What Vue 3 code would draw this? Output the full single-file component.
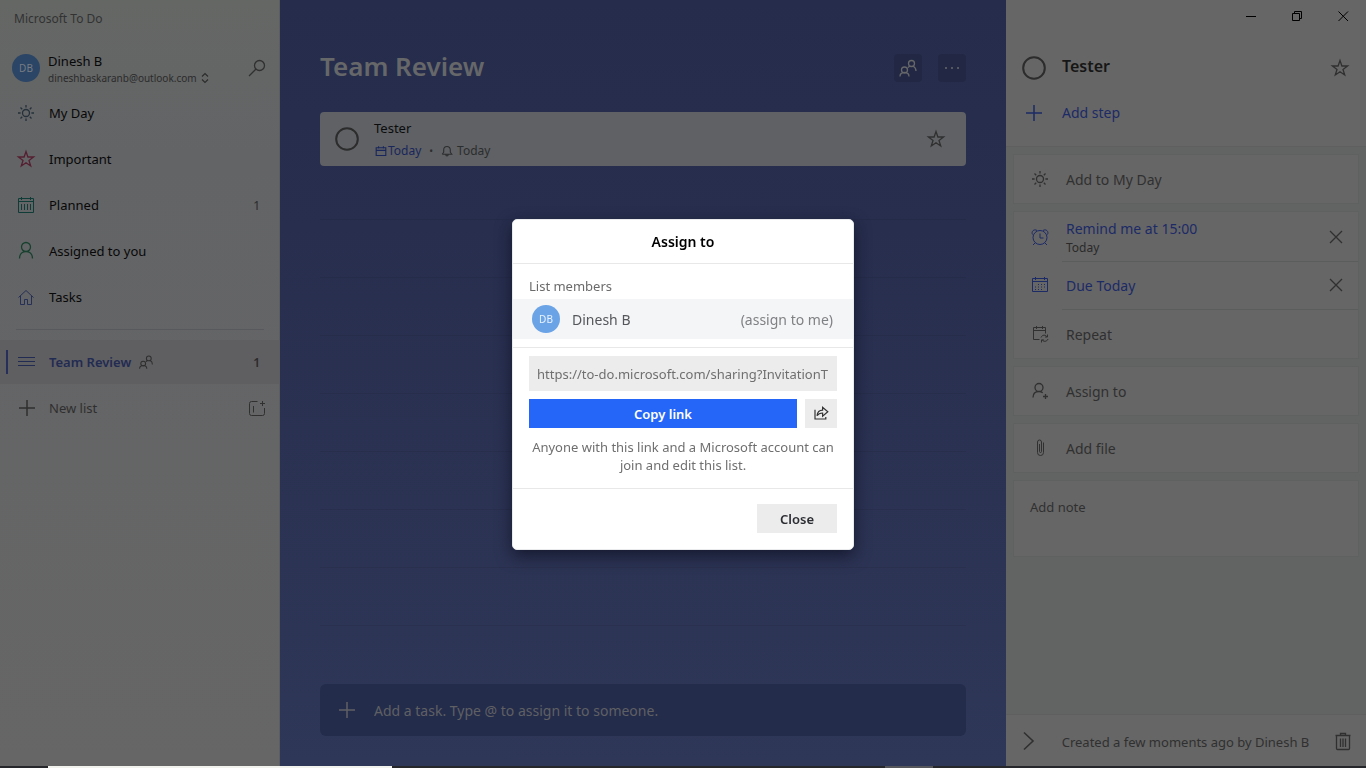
<script setup>
import { h, ref } from 'vue'

const shapes = {
  sun: 'M10 6.5a3.5 3.5 0 1 0 0 7a3.5 3.5 0 1 0 0-7ZM10 2v2.6M10 15.4V18M2 10h2.6M15.4 10H18M4.5 4.5l1.7 1.7M13.8 13.8l1.7 1.7M15.5 4.5l-1.7 1.7M6.2 13.8l-1.7 1.7',
  star: 'M10 2.5L11.9 8H17.6L13 11.5L14.7 17L10 13.7L5.3 17L7 11.5L2.4 8H8.1Z',
  planned: 'M2.5 3.5h15v14h-15zM2.5 6.5h15M5.5 2v3M14.5 2v3M5.5 9v6M8.5 9v6M11.5 9v6M14.5 9v6',
  person: 'M10 1.5a4.5 4.5 0 1 0 0 9a4.5 4.5 0 1 0 0-9ZM3.5 17.5c0-4.5 3-7 6.5-7s6.5 2.5 6.5 7',
  home: 'M2.5 10.5L10 3.5l7.5 7M4.500 9v8.5h4v-5h3v5h4V9',
  list: 'M2 5.5h17M2 9.5h17M2 13.5h17',
  plus: 'M10 2v16M2 10h16',
  people: 'M13.5 2.500a3 3 0 1 0 0 6a3 3 0 1 0 0-6ZM11.7 8.2c-.7.3-1.2.8-1.7 1.5M15.3 8.2c1.800 1 2.700 2.500 2.700 4.800M6.500 9a3 3 0 1 0 0 6a3 3 0 1 0 0-6ZM2 18.500c0-2.500 1.500-4 4.500-4s4.500 1.500 4.500 4',
  search: 'M12.500 2.500a5 5 0 1 0 0 10a5 5 0 1 0 0-10ZM9 11L2 18',
  group: 'M10.500 3.500h-6q-2 0-2 2v10q0 2 2 2h11q2 0 2-2v-5.500M6.500 8v6.500M15.500 3v5M13 5.500h5',
  sort: 'M5 7.500L10 2.500l5 5M5 12.500L10 17.500l5-5',
  more: 'M3 10h2M9 10h2M15 10h2',
  circle: 'M10 1a9 9 0 1 0 0 18a9 9 0 1 0 0-18Z',
  date: 'M2 4.500h16v13H2zM2 9h16M6 2v4M14 2v4',
  bell: 'M2 15.500h16l-2.500-3.500V8a5.500 5.500 0 0 0-11 0v4L2 15.500M8 16c0 3 4 3 4 0',
  alarm: 'M10 3.500a7 7 0 1 0 0 14a7 7 0 1 0 0-14ZM10 6.500v4.500h3.500M2.500 7.500c-1.500-3 1.500-6 4.500-4M17.500 7.500c1.500-3-1.500-6-4.500-4M5 16l-2 2M15 16l2 2',
  due: 'M2.500 3.500h15v13h-15zM2.500 6.500h15M5.500 2v3M14.500 2v3M8 9.500h1M11 9.500h1M14 9.500h1M5 12h1M8 12h1M11 12h1M14 12h1M5 14.500h1M8 14.500h1M11 14.500h1',
  repeat: 'M9.500 15.500h-6v-12h12v6M3.500 6.500h12M6.500 2v3M12.500 2v3M11 13.500c1-3 5-3 6-.5M17.500 10.500V13H15M18 15c-1 3-5 3-6 .5M11.500 18.500V16H14',
  assign: 'M9 2.500a4 4 0 1 0 0 8a4 4 0 1 0 0-8ZM3 16.500c0-3.800 2.500-6 6-6c1.500 0 2.700.5 3.700 1.300M15.500 13v5M13 15.500h5',
  clip: 'M13.500 4.500v10a3 3 0 0 1-6 0V4a2 2 0 0 1 4 0v9.500a1 1 0 0 1-2 0V6',
  close: 'M4 4l12 12M16 4L4 16',
  chevron: 'M6 1.500L15 10L6 18.500',
  trash: 'M2.500 4.500h15M7.500 4V2.500h5V4M3.500 5v12.500q0 1 1 1h11q1 0 1-1V5M7.500 7.500v8.500M10 7.500v8.500M12.500 7.500v8.500',
  share: 'M2.500 6v11.500h13.500v-2.500M5 13.500c.5-4.500 3-7 7-7V3L18.500 8.500l-6.500 5.500V10c-3 0-5.500 1-7 3.500Z',
  minimize: 'M5 10.500h10',
  restore: 'M5.500 7.500h7v7h-7zM7.500 7.500v-2h7v7h-2',
  exit: 'M5.500 5.500l9.500 9.500M15 5.500L5.500 15',
}

const Icon = ({ name, size = 20 }) =>
  h('svg', { viewBox: '0 0 20 20', width: size, height: size, 'aria-hidden': 'true', class: ['icon', 'i-' + name] }, [
    h('path', { d: shapes[name] }),
  ])
Icon.props = ['name', 'size']

const lists = [
  { label: 'My Day', icon: 'sun', tone: 'slate' },
  { label: 'Important', icon: 'star', tone: 'rose' },
  { label: 'Planned', icon: 'planned', tone: 'teal', count: 1 },
  { label: 'Assigned to you', icon: 'person', tone: 'green' },
  { label: 'Tasks', icon: 'home', tone: 'indigo' },
]
const link = ref('https://to-do.microsoft.com/sharing?InvitationT')
const newTask = ref('')
const note = ref('')
</script>

<template>
  <div class="desktop">
    <div class="window">
      <aside class="sidebar">
        <div class="app-name">Microsoft To Do</div>
        <div class="account">
          <span class="avatar">DB</span>
          <button class="who">
            <span class="name">Dinesh B</span>
            <span class="mail">dineshbaskaranb@outlook.com <Icon name="sort" :size="12" /></span>
          </button>
          <button class="plain" aria-label="Search"><Icon name="search" /></button>
        </div>
        <nav>
          <a v-for="l in lists" :key="l.label" href="#" class="entry">
            <Icon :name="l.icon" :class="l.tone" />
            <span>{{ l.label }}</span>
            <span v-if="l.count" class="count">{{ l.count }}</span>
          </a>
          <hr />
          <a href="#" class="entry current">
            <Icon name="list" />
            <span>Team Review</span>
            <Icon name="people" :size="16" class="shared" />
            <span class="count">1</span>
          </a>
        </nav>
        <div class="new-row">
          <button class="new-list"><Icon name="plus" />New list</button>
          <button class="plain" aria-label="New group"><Icon name="group" /></button>
        </div>
      </aside>

      <main class="board">
        <header class="board-head">
          <h1>Team Review</h1>
          <button aria-label="Share list"><Icon name="people" /></button>
          <button aria-label="List options"><Icon name="more" /></button>
        </header>
        <div class="task">
          <button class="plain ring" aria-label="Complete task"><Icon name="circle" :size="24" /></button>
          <div class="task-body">
            <div>Tester</div>
            <div class="meta">
              <span class="due"><Icon name="date" :size="12" />Today</span>
              <span class="dot">•</span>
              <Icon name="bell" :size="12" /><span>Today</span>
            </div>
          </div>
          <button class="plain" aria-label="Mark important"><Icon name="star" /></button>
        </div>
        <div class="ruled"></div>
        <label class="add-task">
          <Icon name="plus" />
          <input v-model="newTask" type="text" placeholder="Add a task. Type @ to assign it to someone." aria-label="Add a task" />
        </label>
      </main>

      <aside class="details">
        <div class="details-top">
          <div class="controls">
            <button aria-label="Minimize"><Icon name="minimize" /></button>
            <button aria-label="Restore"><Icon name="restore" /></button>
            <button aria-label="Close window"><Icon name="exit" /></button>
          </div>
          <div class="heading">
            <button class="plain ring" aria-label="Complete"><Icon name="circle" :size="24" /></button>
            <h2>Tester</h2>
            <button class="plain" aria-label="Important"><Icon name="star" /></button>
          </div>
          <button class="step"><Icon name="plus" /><span>Add step</span></button>
        </div>
        <div class="cards">
          <div class="card"><button class="row"><Icon name="sun" /><span>Add to My Day</span></button></div>
          <div class="card">
            <div class="line">
              <button class="row set tall"><Icon name="alarm" /><span>Remind me at 15:00<small>Today</small></span></button>
              <button class="plain" aria-label="Remove reminder"><Icon name="close" /></button>
            </div>
            <div class="line">
              <button class="row set"><Icon name="due" /><span>Due Today</span></button>
              <button class="plain" aria-label="Remove due date"><Icon name="close" /></button>
            </div>
            <div class="line"><button class="row tall"><Icon name="repeat" /><span>Repeat</span></button></div>
          </div>
          <div class="card"><button class="row"><Icon name="assign" /><span>Assign to</span></button></div>
          <div class="card"><button class="row"><Icon name="clip" /><span>Add file</span></button></div>
          <div class="card"><textarea v-model="note" placeholder="Add note" aria-label="Add note"></textarea></div>
        </div>
        <footer class="details-foot">
          <button class="plain" aria-label="Hide details"><Icon name="chevron" /></button>
          <span>Created a few moments ago by Dinesh B</span>
          <button class="plain" aria-label="Delete task"><Icon name="trash" /></button>
        </footer>
      </aside>
    </div>
    <div class="taskbar"><i class="active"></i><i class="idle"></i></div>

    <div class="overlay">
      <section class="modal" role="dialog" aria-modal="true" aria-labelledby="assign-title">
        <h3 id="assign-title">Assign to</h3>
        <div class="members">
          <div class="caption">List members</div>
          <button class="member">
            <span class="avatar bright">DB</span>
            <span>Dinesh B</span>
            <span class="hint">(assign to me)</span>
          </button>
        </div>
        <div class="invite">
          <input v-model="link" type="text" readonly aria-label="Invitation link" />
          <div class="actions">
            <button class="copy">Copy link</button>
            <button class="share" aria-label="Share"><Icon name="share" :size="16" /></button>
          </div>
          <p>Anyone with this link and a Microsoft account can join and edit this list.</p>
        </div>
        <div class="modal-foot"><button>Close</button></div>
      </section>
    </div>
  </div>
</template>

<style>
body { margin: 0; }
</style>

<style scoped>
* { box-sizing: border-box; }
.desktop {
  height: 100vh;
  display: flex;
  flex-direction: column;
  font: 13px/20px "Noto Sans", "Open Sans", sans-serif;
  color: #080808;
  overflow: hidden;
}
button, input, textarea { font: inherit; color: inherit; border: 0; padding: 0; margin: 0; background: none; border-radius: 0; }
button { text-align: left; cursor: pointer; }
input:focus, textarea:focus { outline: 0; }
a { color: inherit; text-decoration: none; }
h1, h2, h3, p { margin: 0; font-weight: 600; }
.icon { display: block; flex: none; fill: none; stroke: currentColor; stroke-width: 1; }
.i-sun, .i-star, .i-person, .i-assign, .i-search, .i-people, .i-close, .i-trash { stroke-width: 1.3; }
.i-plus, .i-share { stroke-width: 1.5; }
.i-chevron, .i-more { stroke-width: 1.6; }
.i-sort, .i-date, .i-bell { stroke-width: 1.8; }
.plain { display: grid; place-items: center; flex: none; color: #303030; }
.window { flex: 1; min-height: 0; display: grid; grid-template-columns: 280px minmax(0, 1fr) 360px; }

.sidebar { background: linear-gradient(#656765, #636466 20%, #666); border-right: 1px solid #5c5d5f; }
.app-name { padding: 9px 14px; height: 54px; font-size: 12px; color: #323232; }
.account { display: flex; align-items: center; height: 28px; padding: 0 12px; margin-bottom: 8px; }
.avatar { width: 28px; height: 28px; border-radius: 50%; background: #2b4566; color: #777c83; display: grid; place-items: center; font-size: 10px; flex: none; }
.who { flex: 1; padding-left: 8px; }
.who .name { display: block; line-height: 20px; }
.mail { display: flex; align-items: center; font-size: 10px; line-height: 14px; color: #2b2b2b; gap: 2px; }
.entry { display: flex; align-items: center; height: 46px; padding: 0 19px 0 16px; gap: 13px; }
.count { margin-left: auto; padding-top: 2px; color: #2b2b2b; font-size: 12px; }
.slate { color: #25303a; }
.rose { color: #551f32; }
.teal { color: #103c38; }
.green { color: #17402e; }
.indigo { color: #262f56; }
hr { border: 0; border-top: 1px solid #57595c; margin: 9px 15px 10px 16px; }
.current { position: relative; height: 44px; background: #5f5f62; color: #222b52; font-weight: 600; }
.current::before { content: ""; position: absolute; left: 6px; top: 10px; width: 2px; height: 24px; background: #262f5c; }
.current .shared { color: #2e2e2e; margin-left: -6px; }
.new-row { display: flex; justify-content: space-between; align-items: center; height: 46px; margin-top: 1px; padding: 0 12px 0 17px; }
.new-list { display: flex; align-items: center; gap: 12px; color: #2f2f2f; }

.board { display: flex; flex-direction: column; padding: 50px 40px 30px; background: linear-gradient(#262d4c, #272e4e 30%, #2f3758); color: #666769; min-width: 0; }
.board-head { display: flex; align-items: center; gap: 16px; height: 36px; margin-bottom: 26px; }
.board-head h1 { flex: 1; font-size: 26px; line-height: 32px; padding-bottom: 4px; }
.board-head button { width: 28px; height: 28px; border-radius: 4px; background: #222844; display: grid; place-items: center; }
.task { display: flex; align-items: center; height: 54px; border-radius: 4px; background: #5f6164; padding: 0 20px 0 15px; color: #0b0c0e; }
.ring { color: #2c2c2c; }
.ring .icon { stroke-width: 1.7; }
.task-body { flex: 1; padding-left: 15px; }
.meta { display: flex; align-items: center; gap: 4px; font-size: 12px; color: #2c2d2e; margin-top: 3px; }
.due { display: flex; align-items: center; gap: 1px; padding-left: 1px; color: #19265c; }
.dot { padding: 0 4px; font-size: 10px; }
.ruled { flex: 1; margin: -4px 0 0; background: repeating-linear-gradient(transparent 0 57px, rgba(0, 0, 0, .07) 57px 58px); }
.add-task { display: flex; align-items: center; height: 52px; margin-top: 5px; padding: 0 17px; gap: 17px; border-radius: 6px; background: #242c4b; color: #5f6064; font-size: 14px; }
.add-task input { flex: 1; min-width: 0; padding-top: 2px; }
::placeholder { color: currentColor; opacity: 1; }

.details { display: flex; flex-direction: column; background: #626363; color: #303030; min-width: 0; }
.details-top { height: 147px; flex: none; background: #666; border-bottom: 1px solid #5f5f5f; }
.controls { display: flex; justify-content: flex-end; height: 32px; color: #000; }
.controls button { width: 46px; display: grid; place-items: center; }
.heading { display: flex; align-items: center; padding: 0 16px; margin-top: 16px; height: 40px; }
.heading h2 { flex: 1; padding: 0 0 4px 16px; font-size: 16px; line-height: 24px; color: #161616; }
.step { display: flex; align-items: center; gap: 18px; margin-top: 13px; padding: 0 18px; height: 24px; color: #1c2a66; font-size: 14px; }
.cards { flex: 1; padding: 7px 7px 0; display: flex; flex-direction: column; gap: 7px; }
.card { background: #666; border: 1px solid #5f6060; }
.row { flex: 1; display: flex; align-items: center; width: 100%; height: 48px; padding-left: 16px; gap: 16px; font-size: 14px; line-height: 20px; }
.row span { padding-top: 2px; }
.row small { display: block; font-size: 12px; line-height: 18px; color: #2a2a2a; }
.tall { height: 49px; }
.set { color: #1c2a66; }
.line { display: flex; align-items: center; position: relative; padding-right: 12px; }
.line + .line::before { content: ""; position: absolute; left: 48px; right: 0; top: 0; height: 1px; background: #5b5c5c; }
.card textarea { display: block; width: 100%; height: 75px; padding: 16px; resize: none; }
.details-foot { display: flex; align-items: center; justify-content: space-between; height: 52px; padding: 0 13px 0 12px; background: #666; border-top: 1px solid #5f5f5f; }
.details-foot span { padding-top: 2px; }
.taskbar { height: 2px; flex: none; background: #26272a; display: flex; }
.active { margin-left: 48px; flex: 0 0 344px; background: #f1f1ee; }
.idle { margin-left: auto; margin-right: 433px; width: 48px; background: #55565c; }

.overlay { position: fixed; inset: 0; display: grid; place-items: center; }
.modal { width: 342px; background: #fff; border: 1px solid #e8eaec; border-radius: 5px; box-shadow: 0 6px 16px rgba(10, 12, 28, .65); }
.modal h3 { height: 44px; line-height: 44px; text-align: center; font-size: 14px; border-bottom: 1px solid #e8e8e8; color: #000; }
.members { padding: 12px 0 8px; border-bottom: 1px solid #e8e8e8; color: #6b6b6b; }
.caption { padding: 0 16px 3px; }
.member { display: flex; align-items: center; width: 100%; height: 40px; padding: 0 20px 0 19px; gap: 12px; background: #f4f5f7; font-size: 14px; color: #55575b; }
.member span:not(.avatar) { padding-top: 2px; }
.bright { background: #6aa3e6; color: #e8f2ff; }
.hint { margin-left: auto; color: #808184; }
.invite { padding: 8px 16px 14px; border-bottom: 1px solid #e8e8e8; color: #6f6f6f; }
.invite input { display: block; width: 100%; height: 35px; padding: 2px 8px 0; background: #ececec; }
.actions { display: flex; gap: 8px; margin: 8px 0 10px; }
.actions button, .modal-foot button { height: 29px; }
.copy, .modal-foot button { padding-top: 2px; font-weight: 600; text-align: center; }
.copy { flex: 1; background: #2566f9; color: #fff; }
.share { width: 32px; background: #ececec; color: #333; display: grid; place-items: center; }
.invite p { font-weight: 400; line-height: 18px; text-align: center; }
.modal-foot { display: flex; justify-content: flex-end; padding: 15px 16px 16px; }
.modal-foot button { width: 80px; background: #ececec; color: #2c2d33; }
</style>
